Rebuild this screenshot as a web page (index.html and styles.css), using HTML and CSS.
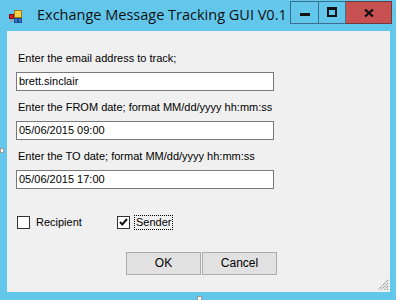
FILE: index.html
```html
<!DOCTYPE html>
<html>
<head>
<meta charset="utf-8">
<link rel="stylesheet" href="styles.css">
</head>
<body>
<div class="window">
  <div class="titlebar">
    <svg class="appicon" width="13" height="13" viewBox="0 0 13 13">
      <rect x="5.5" y="0.5" width="7" height="7" fill="#f3d24a" stroke="#a07818"/>
      <rect x="0.5" y="4.5" width="4" height="4" fill="#d82020" stroke="#801010"/>
      <rect x="5.5" y="8.5" width="3" height="4" fill="#3a78d0" stroke="#1c4a90"/>
      <rect x="9.5" y="8.5" width="3" height="4" fill="#3a78d0" stroke="#1c4a90"/>
      <rect x="1" y="9" width="3" height="3" fill="#9aa4b0"/>
    </svg>
    <div class="title">Exchange Message Tracking GUI V0.1</div>
    <div class="controls">
      <div class="cbtn min"><span class="minbar"></span></div>
      <div class="cbtn max"><span class="maxbox"></span></div>
      <div class="cbtn close">
        <svg width="10" height="8" viewBox="0 0 10 8"><path d="M1 0.5 L9 7.5 M9 0.5 L1 7.5" stroke="#111" stroke-width="2.2"/></svg>
      </div>
    </div>
  </div>
  <div class="client">
    <div class="group">
      <div class="label">Enter the email address to track;</div>
      <div class="textbox">brett.sinclair</div>
    </div>
    <div class="group">
      <div class="label">Enter the FROM date; format MM/dd/yyyy hh:mm:ss</div>
      <div class="textbox">05/06/2015 09:00</div>
    </div>
    <div class="group">
      <div class="label">Enter the TO date; format MM/dd/yyyy hh:mm:ss</div>
      <div class="textbox">05/06/2015 17:00</div>
    </div>
    <div class="checks">
      <div class="check recip"><span class="box"></span><span class="ctext">Recipient</span></div>
      <div class="check sender"><span class="box checked">
        <svg width="11" height="11" viewBox="0 0 11 11"><path d="M2 5 L4.3 7.5 L9 2" fill="none" stroke="#111" stroke-width="2"/></svg>
      </span><span class="ctext focus">Sender</span></div>
    </div>
    <div class="buttons">
      <div class="btn">OK</div>
      <div class="btn">Cancel</div>
    </div>
    <svg class="grip" width="12" height="12" viewBox="0 0 12 12">
      <path d="M11 1 L1 11 M11 4 L4 11 M11 7 L7 11 M11 10 L10 11" stroke="#8a8a8a" stroke-width="1.2" stroke-dasharray="1 1"/>
    </svg>
  </div>
  <span class="handle h-left"></span>
  <span class="handle h-bottom"></span>
</div>
</body>
</html>
```
FILE: styles.css
```css
html, body {
  margin: 0;
  padding: 0;
  background: #ffffff;
}
.window {
  position: relative;
  width: 396px;
  height: 300px;
  background: #63c7ec;
  display: flex;
  flex-direction: column;
  font-family: "Liberation Sans", Arial, sans-serif;
}
.titlebar {
  height: 31px;
  display: flex;
  align-items: flex-start;
}
.appicon {
  margin: 10px 0 0 9px;
}
.title {
  margin: 5px 0 0 15px;
  font-family: "Open Sans", "Noto Sans", sans-serif;
  font-size: 14.5px;
  color: #111;
  flex: 1;
  white-space: nowrap;
}
.controls {
  display: flex;
  margin: 1px 4px 0 0;
}
.cbtn {
  height: 21px;
  border: 1px solid #3a6f8e;
  display: flex;
  align-items: center;
  justify-content: center;
  box-sizing: content-box;
}
.min {
  width: 27px;
}
.max {
  width: 26px;
  border-left: none;
}
.close {
  width: 45px;
  border-left: none;
  background: #c75050;
  border-color: #6e3a3a #6e3a3a #6e3a3a #3a6f8e;
}
.minbar {
  display: block;
  width: 10px;
  height: 3px;
  background: #111;
  margin-top: 4px;
}
.maxbox {
  display: block;
  width: 6px;
  height: 5px;
  border: 2px solid #111;
  border-top-width: 3px;
  margin-top: -2px;
}
.client {
  position: relative;
  flex: 1;
  margin: 0 6px 8px 7px;
  background: #f0f0f0;
  padding: 21px 0 0 9px;
  font-size: 11px;
  color: #000;
}
.group {
  margin-bottom: 10px;
}
.label {
  height: 13px;
  line-height: 13px;
  padding-left: 2px;
  margin-bottom: 7px;
  white-space: nowrap;
}
.textbox {
  height: 17px;
  line-height: 17px;
  border: 1px solid #7a7a7a;
  background: #fff;
  padding-left: 2px;
  box-sizing: content-box;
  width: 254px;
}
.checks {
  display: flex;
  align-items: center;
  margin-top: 26px;
  height: 14px;
}
.check {
  display: flex;
  align-items: center;
}
.recip {
  width: 100px;
  margin-left: 1px;
}
.box {
  width: 11px;
  height: 11px;
  border: 1px solid #333;
  background: #fff;
  display: flex;
  align-items: center;
  justify-content: center;
}
.ctext {
  margin-left: 6px;
  height: 13px;
  line-height: 13px;
}
.focus {
  margin-left: 5px;
  outline: 1px dotted #000;
  padding: 0 1px;
}
.buttons {
  display: flex;
  margin: 23px 0 0 110px;
  gap: 1px;
}
.btn {
  width: 73px;
  height: 21px;
  line-height: 21px;
  text-align: center;
  background: #e1e1e1;
  border: 1px solid #adadad;
  font-size: 12px;
}
.grip {
  position: absolute;
  right: 1px;
  bottom: 1px;
}
.handle {
  position: absolute;
  width: 4px;
  height: 5px;
  background: #fff;
  border: 1px solid #9a9a9a;
  box-sizing: border-box;
}
.h-left {
  left: 0;
  top: 148px;
}
.h-bottom {
  left: 197px;
  top: 296px;
  width: 5px;
  height: 5px;
}
```
